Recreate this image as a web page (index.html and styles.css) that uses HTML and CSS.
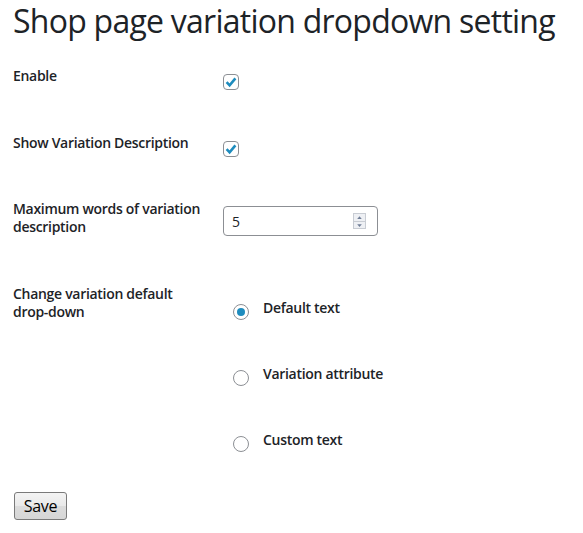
FILE: index.html
```html
<!DOCTYPE html>
<html lang="en">
<head>
<meta charset="utf-8">
<title>Shop page variation dropdown setting</title>
<link rel="stylesheet" href="styles.css">
</head>
<body>
<div class="wrap">
  <h1 class="title">Shop page variation dropdown setting</h1>
  <form class="settings">
    <div class="row">
      <div class="label">Enable</div>
      <div class="control control-check">
        <span class="checkbox"><svg viewBox="0 0 16 16" width="16" height="16"><path d="M3.6 8.2 L6.6 11.3 L12.4 4.4" fill="none" stroke="#1e8cbe" stroke-width="2.6" stroke-linejoin="miter"/></svg></span>
      </div>
    </div>
    <div class="row">
      <div class="label">Show Variation Description</div>
      <div class="control control-check">
        <span class="checkbox"><svg viewBox="0 0 16 16" width="16" height="16"><path d="M3.6 8.2 L6.6 11.3 L12.4 4.4" fill="none" stroke="#1e8cbe" stroke-width="2.6" stroke-linejoin="miter"/></svg></span>
      </div>
    </div>
    <div class="row">
      <div class="label">Maximum words of variation description</div>
      <div class="control control-input">
        <div class="number">
          <span class="value">5</span>
          <span class="spinner">
            <span class="spin"><svg viewBox="0 0 12 7" width="12" height="7"><path d="M3.5 5 L6 2 L8.5 5 Z" fill="#6f7d96"/></svg></span>
            <span class="spin"><svg viewBox="0 0 12 7" width="12" height="7"><path d="M3.5 2 L6 5 L8.5 2 Z" fill="#6f7d96"/></svg></span>
          </span>
        </div>
      </div>
    </div>
    <div class="row">
      <div class="label">Change variation default drop-down</div>
      <div class="control control-radios">
        <div class="option"><span class="radio checked"></span><span class="opt-text">Default text</span></div>
        <div class="option"><span class="radio"></span><span class="opt-text">Variation attribute</span></div>
        <div class="option"><span class="radio"></span><span class="opt-text">Custom text</span></div>
      </div>
    </div>
    <div class="actions">
      <button type="button" class="save">Save</button>
    </div>
  </form>
</div>
</body>
</html>
```
FILE: styles.css
```css
html, body {
  margin: 0;
  padding: 0;
  background: #ffffff;
}
body {
  font-family: "Open Sans", "Noto Sans", sans-serif;
  color: #1d2327;
}
.wrap {
  padding-left: 13px;
}
.title {
  margin: 0 0 4px;
  font-size: 32px;
  line-height: 42px;
  font-weight: 400;
  color: #1d2327;
  letter-spacing: -0.75px;
  white-space: nowrap;
}
.row {
  display: grid;
  grid-template-columns: 210px 1fr;
  align-items: start;
  padding: 20px 0 28.5px;
}
.label {
  font-size: 14px;
  line-height: 18px;
  font-weight: 600;
  width: 192px;
  letter-spacing: -0.3px;
  margin: 1px 0 -1px;
}
.control-check {
  margin: 8px 0 -8px;
}
.checkbox {
  display: block;
  width: 16px;
  height: 16px;
  box-sizing: border-box;
  border: 1px solid #8c8f94;
  border-radius: 4px;
  background: #fff;
  position: relative;
}
.checkbox svg {
  position: absolute;
  left: -1px;
  top: -1px;
}
.control-input {
  margin: 7px 0 -7px;
}
.number {
  width: 155px;
  height: 30px;
  box-sizing: border-box;
  border: 1px solid #8c8f94;
  border-radius: 4px;
  display: flex;
  align-items: center;
  justify-content: space-between;
  padding: 0 11px 0 8px;
  font-size: 14px;
}
.spinner {
  display: flex;
  flex-direction: column;
  width: 13px;
  height: 16px;
  border: 1px solid #c8ccd3;
  box-sizing: border-box;
  background: #eef0f4;
}
.spin {
  flex: 1;
  display: flex;
  align-items: center;
  justify-content: center;
}
.spin + .spin {
  border-top: 1px solid #c8ccd3;
}
.spin svg {
  display: block;
}
.control-radios {
  padding-top: 14.5px;
  display: flex;
  flex-direction: column;
  gap: 44px;
}
.option {
  display: flex;
  align-items: flex-start;
  height: 22px;
  padding-left: 10px;
}
.radio {
  margin-top: 6px;
  width: 16px;
  height: 16px;
  box-sizing: border-box;
  border: 1px solid #8c8f94;
  border-radius: 50%;
  background: #fff;
  display: flex;
  align-items: center;
  justify-content: center;
  flex: none;
}
.radio.checked::before {
  content: "";
  width: 8px;
  height: 8px;
  border-radius: 50%;
  background: #1e8cbe;
}
.opt-text {
  margin: 1px 0 0 14px;
  font-size: 14px;
  line-height: 18px;
  font-weight: 600;
  letter-spacing: -0.3px;
}
.actions {
  padding-top: 11.5px;
}
.save {
  margin: 0 0 0 1px;
  width: 53px;
  height: 28px;
  box-sizing: border-box;
  border: 1px solid #7a7a7a;
  border-radius: 3px;
  background: linear-gradient(#f4f4f4, #e9e9e9 50%, #dcdcdc 51%, #d6d6d6);
  font-family: "Open Sans", "Noto Sans", sans-serif;
  font-size: 16px;
  color: #000;
  padding: 0;
  line-height: 26px;
  letter-spacing: -0.3px;
}
```
